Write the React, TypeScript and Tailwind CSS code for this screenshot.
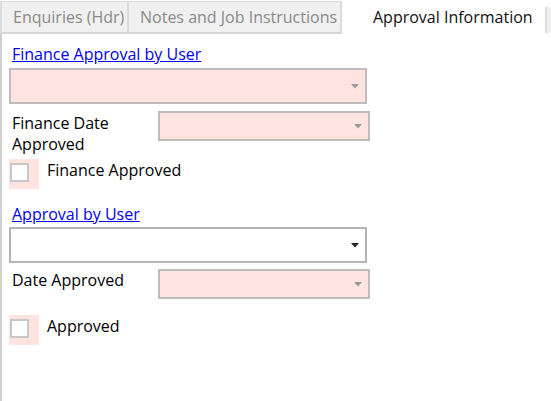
function Arrow({ dark }: { dark?: boolean }) {
  return (
    <svg width="8" height="5" viewBox="0 0 8 5" className="shrink-0">
      <path d="M0 0h8L4 4.5z" fill={dark ? '#222' : '#9a9a9a'} />
    </svg>
  )
}

function Select({ pink, dark, className }: { pink?: boolean; dark?: boolean; className: string }) {
  return (
    <div
      className={`flex items-center justify-end border-2 pr-[6px] ${
        pink ? 'bg-[#ffe3e0] border-[#bdbdbd]' : 'bg-white border-[#b4b4b4]'
      } ${className}`}
    >
      <Arrow dark={dark} />
    </div>
  )
}

function Check({ label }: { label: string }) {
  return (
    <div className="flex items-start">
      <div className="w-[30px] h-[30px] bg-[#ffe3e0] pt-[4px] pl-[1px]">
        <div className="w-[19px] h-[19px] bg-white border-2 border-[#c8c8c8]" />
      </div>
      <span className="ml-[8px] mt-[1px] leading-[20px]">{label}</span>
    </div>
  )
}

export default function App() {
  const tabs = ['Enquiries (Hdr)', 'Notes and Job Instructions']
  return (
    <div
      className="w-[551px] h-[401px] bg-white overflow-hidden text-[16px] text-black"
      style={{ fontFamily: '"Open Sans", "Noto Sans", sans-serif' }}
    >
      <div className="flex h-[34px] items-end">
        <div className="flex h-[33px] border-b-2 border-[#d6d6d6]">
          {tabs.map((t, i) => (
            <div
              key={t}
              className={`flex items-center bg-[#f0f0f0] border-t border-r-2 border-[#dcdcdc] text-[#8a8a8a] ${
                i === 0 ? 'w-[129px] pl-[11px] border-l-2' : 'w-[213px] pl-[11px]'
              }`}
            >
              {t}
            </div>
          ))}
        </div>
        <div className="flex items-center h-[34px] w-[203px] pl-[31px] text-[#111]">Approval Information</div>
        <div className="h-[26px] w-[6px] bg-[#f0f0f0] border-l-2 border-[#dcdcdc] self-end mb-[1px]" />
      </div>
      <div className="h-[367px] border-l-2 border-[#d0d0d0] pl-[7px] pt-[10px]">
        <div className="text-[#0000ee] underline leading-[20px] pl-[3px]">Finance Approval by User</div>
        <Select pink className="mt-[4px] w-[358px] h-[36px]" />
        <div className="flex mt-[7px]">
          <div className="w-[149px] pl-[3px] pt-[2px] leading-[21px]">
            Finance Date
            <br />
            Approved
          </div>
          <Select pink className="w-[212px] h-[30px]" />
        </div>
        <div className="mt-[4px]">
          <Check label="Finance Approved" />
        </div>
        <div className="text-[#0000ee] underline leading-[20px] pl-[3px] mt-[15px]">Approval by User</div>
        <Select dark className="mt-[3px] w-[358px] h-[36px]" />
        <div className="flex mt-[6px]">
          <div className="w-[149px] pl-[3px] leading-[22px]">Date Approved</div>
          <Select pink className="w-[212px] h-[30px]" />
        </div>
        <div className="mt-[16px]">
          <Check label="Approved" />
        </div>
      </div>
    </div>
  )
}
